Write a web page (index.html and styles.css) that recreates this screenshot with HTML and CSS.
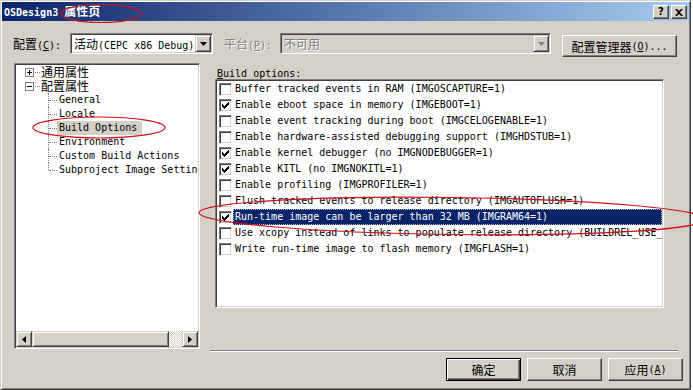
FILE: index.html
```html
<!DOCTYPE html>
<html lang="zh-CN">
<head>
  <meta charset="UTF-8">
  <meta name="viewport" content="width=device-width, initial-scale=1.0">
  <title>OSDesign3 属性页</title>
  <link rel="stylesheet" href="styles.css">
</head>
<body>
<div id="dialog">
  <div id="titlebar">
    <span id="title-text">OSDesign3 <span class="zh">属性页</span></span>
    <div id="caption-buttons">
      <div class="cap-btn">?</div>
      <div class="cap-btn">
        <svg width="8" height="7" viewBox="0 0 8 7"><path d="M0 0h2l2 2 2-2h2L5 3.5 8 7H6L4 5 2 7H0l3-3.5z" fill="#000"/></svg>
      </div>
    </div>
  </div>

  <div id="config-row">
    <div class="row-label"><span class="zh">配置</span>(<u>C</u>):</div>
    <div class="combo" id="config-combo">
      <div class="combo-text"><span class="zh">活动</span>(CEPC x86 Debug)</div>
      <div class="combo-arrow">
        <svg width="7" height="4" viewBox="0 0 7 4"><path d="M0 0h7L3.5 4z" fill="#000"/></svg>
      </div>
    </div>
    <div class="row-label disabled" id="platform-label"><span class="zh">平台</span>(<u>P</u>):</div>
    <div class="combo disabled" id="platform-combo">
      <div class="combo-text"><span class="zh">不可用</span></div>
      <div class="combo-arrow">
        <svg width="7" height="4" viewBox="0 0 7 4"><path d="M0 0h7L3.5 4z" fill="#808080"/></svg>
      </div>
    </div>
    <div class="btn" id="config-manager"><span class="zh">配置管理器</span>(<u>O</u>)...</div>
  </div>

  <div id="main">
    <div id="tree">
      <div id="tree-items">
        <div class="node root">
          <svg class="expander" width="9" height="9" viewBox="0 0 9 9"><rect x="0.5" y="0.5" width="8" height="8" fill="#fff" stroke="#808080"/><path d="M2 4.5h5M4.5 2v5" stroke="#000"/></svg>
          <span class="hline"></span>
          <span class="node-label zh">通用属性</span>
        </div>
        <div class="node root">
          <svg class="expander" width="9" height="9" viewBox="0 0 9 9"><rect x="0.5" y="0.5" width="8" height="8" fill="#fff" stroke="#808080"/><path d="M2 4.5h5" stroke="#000"/></svg>
          <span class="hline"></span>
          <span class="node-label zh">配置属性</span>
        </div>
        <div class="node child"><span class="elbow"></span><span class="node-label">General</span></div>
        <div class="node child"><span class="elbow"></span><span class="node-label">Locale</span></div>
        <div class="node child"><span class="elbow"></span><span class="node-label selected">Build Options</span></div>
        <div class="node child"><span class="elbow"></span><span class="node-label">Environment</span></div>
        <div class="node child"><span class="elbow"></span><span class="node-label">Custom Build Actions</span></div>
        <div class="node child"><span class="elbow last"></span><span class="node-label">Subproject Image Settings</span></div>
      </div>
      <div class="hscroll">
        <div class="scroll-btn">
          <svg width="4" height="7" viewBox="0 0 4 7"><path d="M4 0v7L0 3.5z" fill="#000"/></svg>
        </div>
        <div class="scroll-thumb"></div>
        <div class="scroll-track"></div>
        <div class="scroll-btn">
          <svg width="4" height="7" viewBox="0 0 4 7"><path d="M0 0v7l4-3.5z" fill="#000"/></svg>
        </div>
      </div>
    </div>

    <div id="options-panel">
      <div id="options-label"><u>B</u>uild options:</div>
      <div id="options-list">
        <div class="option"><div class="check"></div><div class="option-text">Buffer tracked events in RAM (IMGOSCAPTURE=1)</div></div>
        <div class="option"><div class="check"><svg width="7" height="7" viewBox="0 0 7 7"><path d="M6 0h1v1H6zM5 1h2v1H5zM0 2h1v1H0zM4 2h3v1H4zM0 3h2v1H0zM3 3h3v1H3zM0 4h5v1H0zM1 5h3v1H1zM2 6h1v1H2z"/></svg></div><div class="option-text">Enable eboot space in memory (IMGEBOOT=1)</div></div>
        <div class="option"><div class="check"></div><div class="option-text">Enable event tracking during boot (IMGCELOGENABLE=1)</div></div>
        <div class="option"><div class="check"></div><div class="option-text">Enable hardware-assisted debugging support (IMGHDSTUB=1)</div></div>
        <div class="option"><div class="check"><svg width="7" height="7" viewBox="0 0 7 7"><path d="M6 0h1v1H6zM5 1h2v1H5zM0 2h1v1H0zM4 2h3v1H4zM0 3h2v1H0zM3 3h3v1H3zM0 4h5v1H0zM1 5h3v1H1zM2 6h1v1H2z"/></svg></div><div class="option-text">Enable kernel debugger (no IMGNODEBUGGER=1)</div></div>
        <div class="option"><div class="check"><svg width="7" height="7" viewBox="0 0 7 7"><path d="M6 0h1v1H6zM5 1h2v1H5zM0 2h1v1H0zM4 2h3v1H4zM0 3h2v1H0zM3 3h3v1H3zM0 4h5v1H0zM1 5h3v1H1zM2 6h1v1H2z"/></svg></div><div class="option-text">Enable KITL (no IMGNOKITL=1)</div></div>
        <div class="option"><div class="check"></div><div class="option-text">Enable profiling (IMGPROFILER=1)</div></div>
        <div class="option"><div class="check"></div><div class="option-text">Flush tracked events to release directory (IMGAUTOFLUSH=1)</div></div>
        <div class="option"><div class="check"><svg width="7" height="7" viewBox="0 0 7 7"><path d="M6 0h1v1H6zM5 1h2v1H5zM0 2h1v1H0zM4 2h3v1H4zM0 3h2v1H0zM3 3h3v1H3zM0 4h5v1H0zM1 5h3v1H1zM2 6h1v1H2z"/></svg></div><div class="option-text selected">Run-time image can be larger than 32 MB (IMGRAM64=1)</div></div>
        <div class="option"><div class="check"></div><div class="option-text">Use xcopy instead of links to populate release directory (BUILDREL_USE_COPY=1)</div></div>
        <div class="option"><div class="check"></div><div class="option-text">Write run-time image to flash memory (IMGFLASH=1)</div></div>
      </div>
    </div>
  </div>

  <div id="footer">
    <div class="btn default"><span class="zh">确定</span></div>
    <div class="btn"><span class="zh">取消</span></div>
    <div class="btn"><span class="zh">应用</span>(<u>A</u>)</div>
  </div>
</div>

<!-- red hand-drawn marks over the screenshot -->
<svg id="marks" width="693" height="390" viewBox="0 0 693 390">
  <ellipse cx="101" cy="13.5" rx="40" ry="9" />
  <ellipse cx="99" cy="127.5" rx="66" ry="10.5" />
  <ellipse cx="452" cy="216" rx="253" ry="18.5" transform="rotate(0.75 452 216)" />
</svg>
</body>
</html>
```

FILE: styles.css
```css
body {
  margin: 0;
  background: #ffffff;
  font-family: "DejaVu Sans Mono", monospace;
  font-size: 10px;
  color: #000;
}

.zh {
  font-family: "Noto Sans CJK SC", sans-serif;
  font-size: 12px;
}

u {
  text-decoration: underline;
  text-underline-offset: 1px;
}

#dialog {
  width: 691px;
  height: 390px;
  box-sizing: border-box;
  background: #d4d0c8;
  border: 1px solid;
  border-color: #d4d0c8 #404040 #404040 #d4d0c8;
  box-shadow: inset 1px 1px #fff, inset -1px -1px #808080;
  padding: 1px;
  display: flex;
  flex-direction: column;
}

/* title bar */
#titlebar {
  height: 19px;
  flex-shrink: 0;
  background: linear-gradient(to right, #0a246a, #a6caf0);
  display: flex;
  align-items: center;
  justify-content: space-between;
  padding: 0 2px;
  color: #fff;
  font-weight: bold;
  line-height: 19px;
}

#title-text .zh {
  font-weight: bold;
}

#caption-buttons {
  display: flex;
  gap: 2px;
  margin-top: 1px;
}

.cap-btn {
  width: 16px;
  height: 14px;
  box-sizing: border-box;
  background: #d4d0c8;
  border: 1px solid;
  border-color: #fff #404040 #404040 #fff;
  box-shadow: inset -1px -1px #808080;
  display: flex;
  align-items: center;
  justify-content: center;
  color: #000;
  font-family: "DejaVu Sans", sans-serif;
  font-size: 10px;
  font-weight: bold;
  line-height: 12px;
}

/* configuration row */
#config-row {
  display: flex;
  align-items: flex-start;
  margin-top: 11px;
  padding-left: 11px;
  height: 25px;
  flex-shrink: 0;
}

.row-label {
  width: 57px;
  margin-top: 1px;
  line-height: 21px;
  white-space: nowrap;
}

#platform-label {
  width: 56px;
  margin-left: 11px;
}

.disabled {
  color: #808080;
  text-shadow: 1px 1px #fff;
}

.combo {
  height: 21px;
  margin-top: 1px;
  box-sizing: border-box;
  background: #fff;
  border: 1px solid;
  border-color: #808080 #fff #fff #808080;
  box-shadow: inset 1px 1px #404040, inset -1px -1px #d4d0c8;
  padding: 1px;
  display: flex;
}

.combo.disabled {
  background: #d4d0c8;
}

#config-combo {
  width: 143px;
}

#platform-combo {
  width: 271px;
}

.combo-text {
  flex: 1;
  padding-left: 2px;
  line-height: 17px;
  white-space: nowrap;
  overflow: hidden;
}

.combo-arrow {
  width: 16px;
  height: 17px;
  box-sizing: border-box;
  background: #d4d0c8;
  border: 1px solid;
  border-color: #d4d0c8 #404040 #404040 #d4d0c8;
  box-shadow: inset 1px 1px #fff, inset -1px -1px #808080;
  display: flex;
  align-items: center;
  justify-content: center;
}

.btn {
  box-sizing: border-box;
  background: #d4d0c8;
  border: 1px solid;
  border-color: #fff #404040 #404040 #fff;
  box-shadow: inset -1px -1px #808080;
  display: flex;
  align-items: center;
  justify-content: center;
  white-space: nowrap;
}

.btn.default {
  border-color: #000;
  box-shadow: inset 1px 1px #fff, inset -1px -1px #404040, inset -2px -2px #808080;
}

#config-manager {
  width: 115px;
  height: 22px;
  margin-top: 3px;
  margin-left: 11px;
}

/* tree and options */
#main {
  display: flex;
  margin-top: 6px;
  padding-left: 12px;
  height: 288px;
  flex-shrink: 0;
}

#tree {
  width: 186px;
  height: 286px;
  box-sizing: border-box;
  background: #fff;
  border: 1px solid;
  border-color: #808080 #fff #fff #808080;
  box-shadow: inset 1px 1px #404040, inset -1px -1px #d4d0c8;
  padding: 1px;
  display: flex;
  flex-direction: column;
}

#tree-items {
  flex: 1;
  overflow: hidden;
}

.node {
  height: 14px;
  line-height: 14px;
  display: flex;
  align-items: center;
  white-space: nowrap;
}

.node.root {
  padding-left: 9px;
}

.expander {
  display: block;
  flex-shrink: 0;
}

.hline {
  width: 5px;
  margin-left: 1px;
  border-top: 1px dotted #808080;
}

.node.root .node-label {
  padding-left: 1px;
}

.node.child {
  padding-left: 32px;
}

.elbow {
  position: relative;
  width: 9px;
  height: 14px;
  flex-shrink: 0;
}

.elbow::before {
  content: "";
  position: absolute;
  left: 0;
  top: 0;
  height: 14px;
  border-left: 1px dotted #808080;
}

.elbow.last::before {
  height: 7px;
}

.elbow::after {
  content: "";
  position: absolute;
  left: 1px;
  top: 7px;
  width: 8px;
  border-top: 1px dotted #808080;
}

.node.child .node-label {
  padding: 0 5px 0 2px;
}

.node-label.selected {
  background: #d4d0c8;
}

.hscroll {
  height: 16px;
  display: flex;
  flex-shrink: 0;
}

.scroll-btn {
  width: 16px;
  height: 16px;
  box-sizing: border-box;
  background: #d4d0c8;
  border: 1px solid;
  border-color: #d4d0c8 #404040 #404040 #d4d0c8;
  box-shadow: inset 1px 1px #fff, inset -1px -1px #808080;
  display: flex;
  align-items: center;
  justify-content: center;
}

.scroll-thumb {
  width: 137px;
  box-sizing: border-box;
  background: #d4d0c8;
  border: 1px solid;
  border-color: #d4d0c8 #404040 #404040 #d4d0c8;
  box-shadow: inset 1px 1px #fff, inset -1px -1px #808080;
}

.scroll-track {
  flex: 1;
  background: repeating-conic-gradient(#d4d0c8 0 25%, #fff 0 50%) 0 0 / 2px 2px;
}

#options-panel {
  width: 468px;
  height: 288px;
  margin-left: 10px;
  box-sizing: border-box;
  border-bottom: 1px solid #808080;
  box-shadow: 0 1px #fff;
}

#options-label {
  padding: 5px 0 0 7px;
  line-height: 11px;
}

#options-list {
  width: 449px;
  height: 229px;
  margin-left: 5px;
  box-sizing: border-box;
  background: #fff;
  border: 1px solid;
  border-color: #808080 #fff #fff #808080;
  box-shadow: inset 1px 1px #404040, inset -1px -1px #d4d0c8;
  padding: 1px;
  overflow: hidden;
}

.option {
  height: 16px;
  display: flex;
  align-items: center;
}

.check {
  width: 13px;
  height: 13px;
  flex-shrink: 0;
  margin-left: 2px;
  box-sizing: border-box;
  background: #fff;
  border: 1px solid;
  border-color: #808080 #fff #fff #808080;
  box-shadow: inset 1px 1px #404040, inset -1px -1px #d4d0c8;
  padding: 1px;
}

.check svg {
  display: block;
  margin: 1px;
}

.option-text {
  flex: 1;
  margin-left: 1px;
  padding-left: 2px;
  height: 16px;
  line-height: 16px;
  white-space: nowrap;
  overflow: hidden;
}

.option-text.selected {
  background: #0a246a;
  color: #fff;
  outline: 1px dotted #b0b8d0;
  outline-offset: -1px;
}

/* bottom buttons */
#footer {
  display: flex;
  justify-content: flex-end;
  gap: 6px;
  margin-top: 7px;
  padding-right: 6px;
}

#footer .btn {
  width: 75px;
  height: 23px;
}

#marks {
  position: absolute;
  top: 0;
  left: 0;
  pointer-events: none;
  fill: none;
  stroke: #d0101c;
  stroke-width: 1.2;
}
```
